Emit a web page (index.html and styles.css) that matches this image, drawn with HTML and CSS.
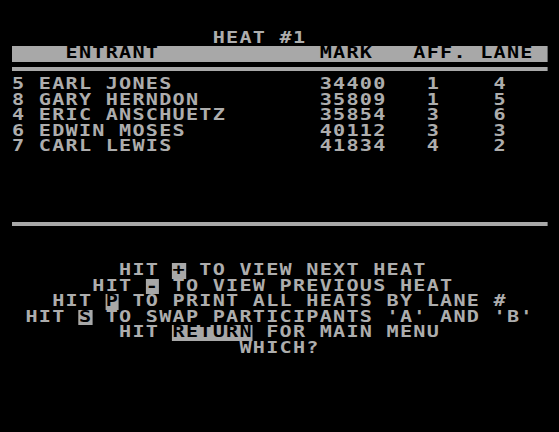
FILE: index.html
```html
<!DOCTYPE html>
<html>
<head>
<meta charset="utf-8">
<title>Heat #1</title>
<link rel="stylesheet" href="styles.css">
</head>
<body>
<div class="screen">
  <div class="row">               HEAT #1</div>
  <div class="row header">    ENTRANT            MARK   AFF. LANE </div>
  <div class="rule"></div>
  <div class="entries">
    <div class="row">5 EARL JONES           34400   1    4</div>
    <div class="row">8 GARY HERNDON         35809   1    5</div>
    <div class="row">4 ERIC ANSCHUETZ       35854   3    6</div>
    <div class="row">6 EDWIN MOSES          40112   3    3</div>
    <div class="row">7 CARL LEWIS           41834   4    2</div>
  </div>
  <div class="rule"></div>
  <div class="menu">
    <div class="row">        HIT <span class="key">+</span> TO VIEW NEXT HEAT</div>
    <div class="row">      HIT <span class="key">-</span> TO VIEW PREVIOUS HEAT</div>
    <div class="row">   HIT <span class="key">P</span> TO PRINT ALL HEATS BY LANE #</div>
    <div class="row"> HIT <span class="key">S</span> TO SWAP PARTICIPANTS 'A' AND 'B'</div>
    <div class="row">        HIT <span class="key">RETURN</span> FOR MAIN MENU</div>
    <div class="row">                 WHICH?</div>
  </div>
</div>
</body>
</html>
```

FILE: styles.css
```css
html,
body {
  margin: 0;
  background: #000;
}

body {
  width: 559px;
  height: 432px;
  overflow: hidden;
}

/* 40 x 24 character screen; glyphs are stretched horizontally like wide TV pixels */
.screen {
  width: 411.5px;
  margin-left: 12px;
  padding-top: 30.5px;
  transform: scaleX(1.3);
  transform-origin: 0 0;
  font-family: "DejaVu Sans Mono", "Liberation Mono", monospace;
  font-weight: bold;
  font-size: 15.5px;
  letter-spacing: 0.957px;
  color: #adadad;
}

.row {
  height: 15.5px;
  line-height: 15.5px;
  white-space: pre;
}

.header {
  background: #a8a8a8;
  color: #000;
}

/* a rule occupies one character row: 5px gap, 4px line, 6.5px gap */
.rule {
  height: 4px;
  margin: 5px 0 6.5px;
  background: #a8a8a8;
}

.entries {
  padding-bottom: 62px;
}

.menu {
  padding-top: 31px;
}

/* inverse-video key names */
.key {
  display: inline-block;
  height: 15.5px;
  vertical-align: top;
  background: #a8a8a8;
  color: #000;
}
```
